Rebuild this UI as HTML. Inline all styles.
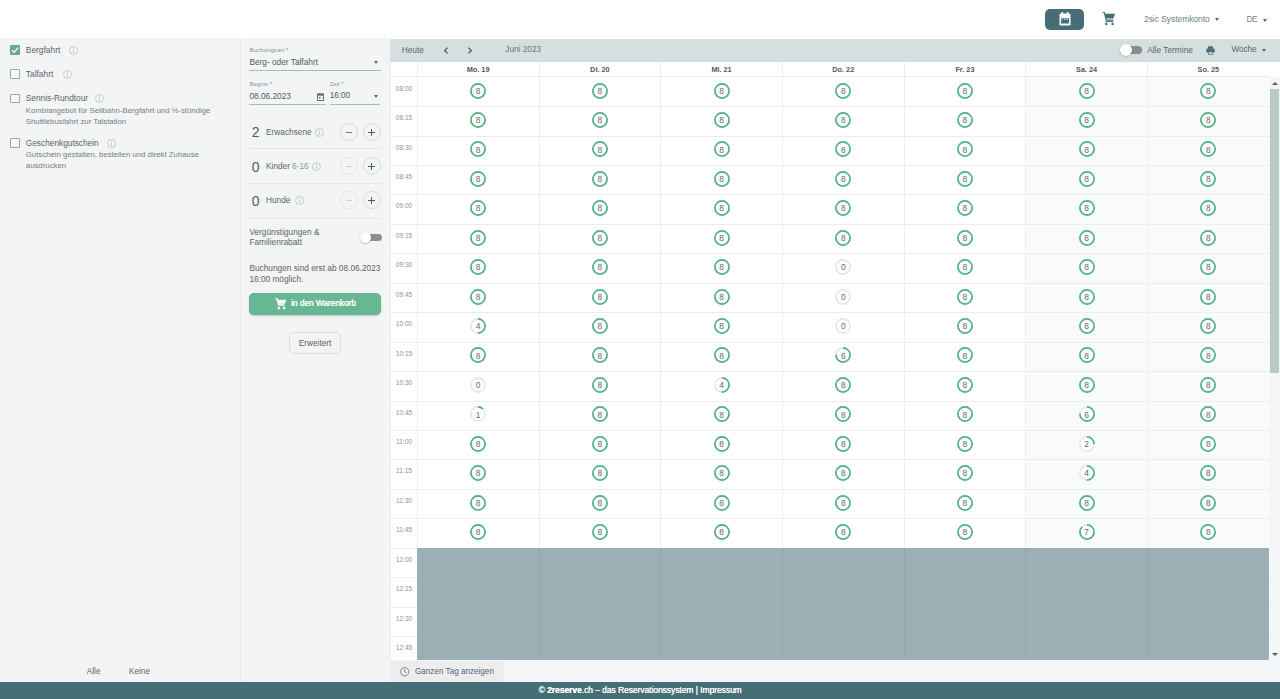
<!DOCTYPE html>
<html><head><meta charset="utf-8"><title>2reserve</title>
<style>
html,body{margin:0;padding:0;width:1280px;height:699px;overflow:hidden;background:#fff;}
body{position:relative;font-family:"Liberation Sans", sans-serif;}
.t{position:absolute;white-space:nowrap;line-height:1;}
.r{position:absolute;}
svg.r{overflow:visible;}
</style></head><body>
<div class="r" style="left:0px;top:0px;width:1280px;height:38px;background:#ffffff;"></div>
<div class="r" style="left:1045px;top:8.5px;width:39px;height:21.5px;background:#466e76;border-radius:5px;"></div>
<svg class="r" style="left:1058px;top:11px" width="14" height="16" viewBox="0 0 14 16">
<rect x="1.5" y="2.5" width="11" height="12" rx="1.3" fill="#fff"/>
<rect x="3.5" y="1" width="1.6" height="3" fill="#fff"/><rect x="8.9" y="1" width="1.6" height="3" fill="#fff"/>
<rect x="3" y="7" width="8" height="5.5" fill="#466e76"/>
<rect x="3.5" y="7.6" width="1.5" height="1" fill="#fff"/><rect x="6" y="7.6" width="1.5" height="1" fill="#fff"/><rect x="8.5" y="7.6" width="1.5" height="1" fill="#fff"/>
</svg>
<svg class="r" style="left:1102px;top:12px" width="14" height="14" viewBox="0 0 14 14">
<path d="M0.5 0.5 L2.3 0.5 L4.3 8.2 L11.2 8.2" fill="none" stroke="#466e76" stroke-width="1.2"/>
<path d="M2.6 1.8 L13 1.8 L11.3 6.6 L3.8 6.6 Z" fill="#466e76"/>
<path d="M3.5 9.6 L11.5 9.6" stroke="#466e76" stroke-width="1"/>
<circle cx="4.3" cy="12" r="1.2" fill="#466e76"/><circle cx="10.6" cy="12" r="1.2" fill="#466e76"/>
</svg>
<div class="t" style="left:1144.00px;top:14.89px;font-size:8.4px;color:#6d7c7e;">2sic Systemkonto</div>
<div class="r" style="left:1215px;top:18px;width:0;height:0;border-left:2.5px solid transparent;border-right:2.5px solid transparent;border-top:3px solid #466e76"></div>
<div class="t" style="left:1246.50px;top:14.89px;font-size:8.4px;color:#7a878b;letter-spacing:-0.6px;">DE</div>
<div class="r" style="left:1263px;top:19px;width:0;height:0;border-left:2.5px solid transparent;border-right:2.5px solid transparent;border-top:3px solid #466e76"></div>
<div class="r" style="left:0px;top:38px;width:240px;height:644px;background:#f3f4f5;"></div>
<div class="r" style="left:240px;top:38px;width:1px;height:644px;background:#e8eaeb;"></div>
<div class="r" style="left:241px;top:38px;width:149px;height:644px;background:#f3f4f5;"></div>
<div class="r" style="left:10px;top:45.3px;width:10px;height:10px;background:#6aa98c;border-radius:1px"></div>
<svg class="r" style="left:10px;top:45.3px" width="10" height="10" viewBox="0 0 10 10"><path d="M2 5.2 L4.1 7.3 L8.3 2.6" fill="none" stroke="#fff" stroke-width="1.4"/></svg>
<div class="t" style="left:25.80px;top:45.69px;font-size:8.4px;color:#5b6468;">Bergfahrt</div>
<svg class="r" style="left:68.50px;top:46.40px" width="9" height="9" viewBox="0 0 10 10"><circle cx="5" cy="5" r="4.4" fill="none" stroke="#b9c2c4" stroke-width="0.9"/><rect x="4.5" y="4.2" width="1" height="3.4" fill="#b9c2c4"/><rect x="4.5" y="2.5" width="1" height="1" fill="#b9c2c4"/></svg>
<div class="r" style="left:10px;top:69.2px;width:7.6px;height:7.6px;border:1.2px solid #95a5a8;border-radius:1px;background:#f8f9f9"></div>
<div class="t" style="left:25.80px;top:69.89px;font-size:8.4px;color:#5b6468;">Talfahrt</div>
<svg class="r" style="left:62.50px;top:70.20px" width="9" height="9" viewBox="0 0 10 10"><circle cx="5" cy="5" r="4.4" fill="none" stroke="#b9c2c4" stroke-width="0.9"/><rect x="4.5" y="4.2" width="1" height="3.4" fill="#b9c2c4"/><rect x="4.5" y="2.5" width="1" height="1" fill="#b9c2c4"/></svg>
<div class="r" style="left:10px;top:93.6px;width:7.6px;height:7.6px;border:1.2px solid #95a5a8;border-radius:1px;background:#f8f9f9"></div>
<div class="t" style="left:25.80px;top:94.27px;font-size:8.3px;color:#5b6468;">Sennis-Rundtour</div>
<svg class="r" style="left:95.20px;top:94.10px" width="9" height="9" viewBox="0 0 10 10"><circle cx="5" cy="5" r="4.4" fill="none" stroke="#b9c2c4" stroke-width="0.9"/><rect x="4.5" y="4.2" width="1" height="3.4" fill="#b9c2c4"/><rect x="4.5" y="2.5" width="1" height="1" fill="#b9c2c4"/></svg>
<div class="t" style="left:25.80px;top:106.80px;font-size:7.8px;color:#74807f;">Kombiangebot für Seilbahn-Bergfahrt und ½-stündige</div>
<div class="t" style="left:25.80px;top:118.30px;font-size:7.8px;color:#74807f;">Shuttlebusfahrt zur Talstation</div>
<div class="r" style="left:10px;top:138px;width:7.6px;height:7.6px;border:1.2px solid #95a5a8;border-radius:1px;background:#f8f9f9"></div>
<div class="t" style="left:25.80px;top:138.97px;font-size:8.3px;color:#5b6468;">Geschenkgutschein</div>
<svg class="r" style="left:106.50px;top:138.50px" width="9" height="9" viewBox="0 0 10 10"><circle cx="5" cy="5" r="4.4" fill="none" stroke="#b9c2c4" stroke-width="0.9"/><rect x="4.5" y="4.2" width="1" height="3.4" fill="#b9c2c4"/><rect x="4.5" y="2.5" width="1" height="1" fill="#b9c2c4"/></svg>
<div class="t" style="left:25.80px;top:150.60px;font-size:7.8px;color:#74807f;">Gutschein gestalten, bestellen und direkt Zuhause</div>
<div class="t" style="left:25.80px;top:162.20px;font-size:7.8px;color:#74807f;">ausdrucken</div>
<div class="t" style="left:86.80px;top:667.76px;font-size:8.2px;color:#5b6468;">Alle</div>
<div class="t" style="left:129.00px;top:667.76px;font-size:8.2px;color:#5b6468;">Keine</div>
<div class="t" style="left:249.40px;top:47.05px;font-size:6.2px;color:#8a9598;">Buchungsart *</div>
<div class="t" style="left:249.40px;top:58.17px;font-size:8.3px;color:#4f5a5e;">Berg- oder Talfahrt</div>
<div class="r" style="left:373.5px;top:60.5px;width:0;height:0;border-left:2.5px solid transparent;border-right:2.5px solid transparent;border-top:3px solid #5b6468"></div>
<div class="r" style="left:249.4px;top:70px;width:132px;height:1px;background:#a9bbb8;"></div>
<div class="t" style="left:249.40px;top:81.22px;font-size:6.0px;color:#8a9598;">Beginn *</div>
<div class="t" style="left:329.70px;top:81.22px;font-size:6.0px;color:#8a9598;">Zeit *</div>
<div class="t" style="left:249.40px;top:91.57px;font-size:8.3px;color:#4f5a5e;">08.06.2023</div>
<svg class="r" style="left:316.5px;top:92.5px" width="7" height="8" viewBox="0 0 7 8"><rect x="0.5" y="1" width="6" height="6.5" fill="none" stroke="#5b6468" stroke-width="0.9"/><rect x="0.5" y="1" width="6" height="1.6" fill="#5b6468"/><rect x="1.8" y="0" width="0.9" height="1.5" fill="#5b6468"/><rect x="4.3" y="0" width="0.9" height="1.5" fill="#5b6468"/><rect x="2" y="4" width="1.5" height="1.5" fill="#5b6468"/></svg>
<div class="t" style="left:329.70px;top:91.66px;font-size:8.2px;color:#4f5a5e;">16:00</div>
<div class="r" style="left:373.5px;top:95px;width:0;height:0;border-left:2.5px solid transparent;border-right:2.5px solid transparent;border-top:3px solid #5b6468"></div>
<div class="r" style="left:249.4px;top:103.5px;width:77px;height:1px;background:#a9bbb8;"></div>
<div class="r" style="left:329.7px;top:103.5px;width:50.5px;height:1px;background:#a9bbb8;"></div>
<div class="t" style="left:251.80px;top:125.35px;font-size:14px;color:#525c60;">2</div>
<div class="t" style="left:266.00px;top:127.67px;font-size:8.3px;color:#5b6468;">Erwachsene</div>
<svg class="r" style="left:315.30px;top:127.50px" width="9" height="9" viewBox="0 0 10 10"><circle cx="5" cy="5" r="4.4" fill="none" stroke="#b9c2c4" stroke-width="0.9"/><rect x="4.5" y="4.2" width="1" height="3.4" fill="#b9c2c4"/><rect x="4.5" y="2.5" width="1" height="1" fill="#b9c2c4"/></svg>
<div class="r" style="left:339.5px;top:122.75px;width:16.5px;height:16.5px;border:1px solid #d3dbdb;border-radius:50%"></div>
<div class="r" style="left:345.5px;top:131.50px;width:6.5px;height:1px;background:#6b7478"></div>
<div class="r" style="left:362.5px;top:122.75px;width:16.5px;height:16.5px;border:1px solid #d3dbdb;border-radius:50%"></div>
<div class="r" style="left:368px;top:131.50px;width:7px;height:1px;background:#4f5a5e"></div>
<div class="r" style="left:371px;top:128.50px;width:1px;height:7px;background:#4f5a5e"></div>
<div class="r" style="left:248.7px;top:148px;width:133px;height:1.2px;background:#e3e7e8;"></div>
<div class="t" style="left:251.80px;top:159.55px;font-size:14px;color:#525c60;">0</div>
<div class="t" style="left:266.00px;top:161.87px;font-size:8.3px;color:#5b6468;">Kinder</div>
<div class="t" style="left:292.00px;top:161.87px;font-size:8.3px;color:#8d9a9d;">6-16</div>
<svg class="r" style="left:312.00px;top:161.70px" width="9" height="9" viewBox="0 0 10 10"><circle cx="5" cy="5" r="4.4" fill="none" stroke="#b9c2c4" stroke-width="0.9"/><rect x="4.5" y="4.2" width="1" height="3.4" fill="#b9c2c4"/><rect x="4.5" y="2.5" width="1" height="1" fill="#b9c2c4"/></svg>
<div class="r" style="left:339.5px;top:156.95px;width:16.5px;height:16.5px;border:1px solid #e3e8e8;border-radius:50%"></div>
<div class="r" style="left:345.5px;top:165.70px;width:6.5px;height:1px;background:#c9d0d1"></div>
<div class="r" style="left:362.5px;top:156.95px;width:16.5px;height:16.5px;border:1px solid #d3dbdb;border-radius:50%"></div>
<div class="r" style="left:368px;top:165.70px;width:7px;height:1px;background:#4f5a5e"></div>
<div class="r" style="left:371px;top:162.70px;width:1px;height:7px;background:#4f5a5e"></div>
<div class="r" style="left:248.7px;top:183.3px;width:133px;height:1px;background:#e3e7e8;"></div>
<div class="t" style="left:251.80px;top:193.55px;font-size:14px;color:#525c60;">0</div>
<div class="t" style="left:266.00px;top:195.87px;font-size:8.3px;color:#5b6468;">Hunde</div>
<svg class="r" style="left:294.50px;top:195.70px" width="9" height="9" viewBox="0 0 10 10"><circle cx="5" cy="5" r="4.4" fill="none" stroke="#b9c2c4" stroke-width="0.9"/><rect x="4.5" y="4.2" width="1" height="3.4" fill="#b9c2c4"/><rect x="4.5" y="2.5" width="1" height="1" fill="#b9c2c4"/></svg>
<div class="r" style="left:339.5px;top:190.95px;width:16.5px;height:16.5px;border:1px solid #e3e8e8;border-radius:50%"></div>
<div class="r" style="left:345.5px;top:199.70px;width:6.5px;height:1px;background:#c9d0d1"></div>
<div class="r" style="left:362.5px;top:190.95px;width:16.5px;height:16.5px;border:1px solid #d3dbdb;border-radius:50%"></div>
<div class="r" style="left:368px;top:199.70px;width:7px;height:1px;background:#4f5a5e"></div>
<div class="r" style="left:371px;top:196.70px;width:1px;height:7px;background:#4f5a5e"></div>
<div class="r" style="left:248.7px;top:217.6px;width:133px;height:1px;background:#e3e7e8;"></div>
<div class="t" style="left:249.40px;top:227.67px;font-size:8.3px;color:#5b6468;">Vergünstigungen &</div>
<div class="t" style="left:249.40px;top:237.57px;font-size:8.3px;color:#5b6468;">Familienrabatt</div>
<div class="r" style="left:362px;top:233.8px;width:19.5px;height:7.6px;background:#8e8e8e;border-radius:4px;"></div>
<div class="r" style="left:360.2px;top:232.3px;width:10.5px;height:10.5px;background:#fff;border-radius:50%;box-shadow:0 0.5px 1.5px rgba(0,0,0,0.35)"></div>
<div class="t" style="left:249.40px;top:263.57px;font-size:8.3px;color:#5f6064;">Buchungen sind erst ab 08.06.2023</div>
<div class="t" style="left:249.40px;top:275.07px;font-size:8.3px;color:#5f6064;">16:00 möglich.</div>
<div class="r" style="left:249.4px;top:292.6px;width:131.7px;height:22.3px;background:#66b894;border-radius:5px;box-shadow:0 1px 2px rgba(0,0,0,0.2);"></div>
<svg class="r" style="left:275px;top:297.5px" width="12" height="12" viewBox="0 0 14 14">
<path d="M0.5 0.8 L2.3 0.8 L4.3 8.2 L11.2 8.2" fill="none" stroke="#fff" stroke-width="1.6"/>
<path d="M2.6 2 L13.2 2 L11.4 6.8 L3.8 6.8 Z" fill="#fff"/>
<circle cx="4.5" cy="11.8" r="1.5" fill="#fff"/><circle cx="10.6" cy="11.8" r="1.5" fill="#fff"/>
</svg>
<div class="t" style="left:291.00px;top:299.51px;font-size:8.26px;color:#ffffff;text-shadow:0.35px 0 0 #fff;">in den Warenkorb</div>
<div class="r" style="left:288.9px;top:332px;width:50px;height:19.5px;border:1px solid #d9dfdf;border-radius:5px"></div>
<div class="t" style="left:298.70px;top:338.57px;font-size:8.3px;color:#5b6468;">Erweitert</div>
<div class="r" style="left:390px;top:38px;width:890px;height:1px;background:#ffffff;"></div>
<div class="r" style="left:390px;top:39px;width:890px;height:23px;background:#d6dfe0;"></div>
<div class="t" style="left:401.70px;top:45.57px;font-size:8.3px;color:#5b6468;">Heute</div>
<svg class="r" style="left:442.5px;top:46.8px" width="6" height="7" viewBox="0 0 6 7"><path d="M4.6 0.6 L1.6 3.5 L4.6 6.4" fill="none" stroke="#3f5c63" stroke-width="1.3"/></svg>
<svg class="r" style="left:467px;top:46.8px" width="6" height="7" viewBox="0 0 6 7"><path d="M1.4 0.6 L4.4 3.5 L1.4 6.4" fill="none" stroke="#3f5c63" stroke-width="1.3"/></svg>
<div class="t" style="left:505.30px;top:45.62px;font-size:8.25px;color:#6b7478;">Juni 2023</div>
<div class="r" style="left:1126px;top:46px;width:16px;height:8px;background:#8c8c8c;border-radius:4px;"></div>
<div class="r" style="left:1120px;top:44.2px;width:12px;height:12px;background:#fff;border-radius:50%;box-shadow:0 0.5px 1.5px rgba(0,0,0,0.3)"></div>
<div class="t" style="left:1147.20px;top:45.93px;font-size:8.35px;color:#5b6468;">Alle Termine</div>
<svg class="r" style="left:1205.5px;top:45.5px" width="9" height="9" viewBox="0 0 9 9"><rect x="2" y="0.3" width="5" height="2.5" fill="#466e76"/><rect x="0.3" y="2.6" width="8.4" height="4" rx="1" fill="#466e76"/><rect x="2" y="5.5" width="5" height="3.2" fill="#466e76"/><rect x="2.7" y="6.2" width="3.6" height="1.8" fill="#d6dfe0"/></svg>
<div class="t" style="left:1231.50px;top:46.11px;font-size:8.14px;color:#5b6468;">Woche</div>
<div class="r" style="left:1261.5px;top:49px;width:0;height:0;border-left:2.5px solid transparent;border-right:2.5px solid transparent;border-top:3px solid #466e76"></div>
<div class="r" style="left:390px;top:62px;width:890px;height:15px;background:#ffffff;"></div>
<div class="r" style="left:390px;top:76px;width:880px;height:1px;background:#e9edee;"></div>
<div class="t" style="left:378.15px;width:200px;text-align:center;top:65.82px;font-size:7.3px;color:#4f585c;font-weight:700;">Mo. 19</div>
<div class="t" style="left:499.85px;width:200px;text-align:center;top:65.82px;font-size:7.3px;color:#4f585c;font-weight:700;">Di. 20</div>
<div class="r" style="left:538.5px;top:62px;width:1px;height:15px;background:#e9edee;"></div>
<div class="t" style="left:621.55px;width:200px;text-align:center;top:65.82px;font-size:7.3px;color:#4f585c;font-weight:700;">Mi. 21</div>
<div class="r" style="left:660.2px;top:62px;width:1px;height:15px;background:#e9edee;"></div>
<div class="t" style="left:743.25px;width:200px;text-align:center;top:65.82px;font-size:7.3px;color:#4f585c;font-weight:700;">Do. 22</div>
<div class="r" style="left:781.9px;top:62px;width:1px;height:15px;background:#e9edee;"></div>
<div class="t" style="left:864.95px;width:200px;text-align:center;top:65.82px;font-size:7.3px;color:#4f585c;font-weight:700;">Fr. 23</div>
<div class="r" style="left:903.6px;top:62px;width:1px;height:15px;background:#e9edee;"></div>
<div class="t" style="left:986.65px;width:200px;text-align:center;top:65.82px;font-size:7.3px;color:#4f585c;font-weight:700;">Sa. 24</div>
<div class="r" style="left:1025.3px;top:62px;width:1px;height:15px;background:#e9edee;"></div>
<div class="t" style="left:1108.35px;width:200px;text-align:center;top:65.82px;font-size:7.3px;color:#4f585c;font-weight:700;">So. 25</div>
<div class="r" style="left:1147.0px;top:62px;width:1px;height:15px;background:#e9edee;"></div>
<div class="r" style="left:416.5px;top:62px;width:1px;height:15px;background:#e9edee;"></div>
<div class="r" style="left:390px;top:77px;width:880px;height:583px;background:#ffffff;"></div>
<div class="r" style="left:389.6px;top:62px;width:1px;height:598px;background:#e9ebec;"></div>
<div class="r" style="left:1025.8px;top:77px;width:244.4px;height:471px;background:#f9fafa;"></div>
<div class="r" style="left:416.5px;top:77px;width:1px;height:583px;background:#eceff1;"></div>
<div class="r" style="left:538.5px;top:77px;width:1px;height:471px;background:#ebeeee;"></div>
<div class="r" style="left:660.2px;top:77px;width:1px;height:471px;background:#ebeeee;"></div>
<div class="r" style="left:781.9px;top:77px;width:1px;height:471px;background:#ebeeee;"></div>
<div class="r" style="left:903.6px;top:77px;width:1px;height:471px;background:#ebeeee;"></div>
<div class="r" style="left:1025.3px;top:77px;width:1px;height:471px;background:#ebeeee;"></div>
<div class="r" style="left:1147.0px;top:77px;width:1px;height:471px;background:#ebeeee;"></div>
<div class="r" style="left:390px;top:106.14px;width:880px;height:1px;background:#ebeeee;"></div>
<div class="r" style="left:390px;top:135.58px;width:880px;height:1px;background:#ebeeee;"></div>
<div class="r" style="left:390px;top:165.02px;width:880px;height:1px;background:#ebeeee;"></div>
<div class="r" style="left:390px;top:194.46px;width:880px;height:1px;background:#ebeeee;"></div>
<div class="r" style="left:390px;top:223.9px;width:880px;height:1px;background:#ebeeee;"></div>
<div class="r" style="left:390px;top:253.34px;width:880px;height:1px;background:#ebeeee;"></div>
<div class="r" style="left:390px;top:282.78px;width:880px;height:1px;background:#ebeeee;"></div>
<div class="r" style="left:390px;top:312.22px;width:880px;height:1px;background:#ebeeee;"></div>
<div class="r" style="left:390px;top:341.66px;width:880px;height:1px;background:#ebeeee;"></div>
<div class="r" style="left:390px;top:371.1px;width:880px;height:1px;background:#ebeeee;"></div>
<div class="r" style="left:390px;top:400.54px;width:880px;height:1px;background:#ebeeee;"></div>
<div class="r" style="left:390px;top:429.98px;width:880px;height:1px;background:#ebeeee;"></div>
<div class="r" style="left:390px;top:459.42px;width:880px;height:1px;background:#ebeeee;"></div>
<div class="r" style="left:390px;top:488.86px;width:880px;height:1px;background:#ebeeee;"></div>
<div class="r" style="left:390px;top:518.3px;width:880px;height:1px;background:#ebeeee;"></div>
<div class="r" style="left:390px;top:547.74px;width:880px;height:1px;background:#ebeeee;"></div>
<div class="r" style="left:390px;top:577.18px;width:880px;height:1px;background:#ebeeee;"></div>
<div class="r" style="left:390px;top:606.62px;width:880px;height:1px;background:#ebeeee;"></div>
<div class="r" style="left:390px;top:636.06px;width:880px;height:1px;background:#ebeeee;"></div>
<div class="t" style="left:304.00px;width:200px;text-align:center;top:85.71px;font-size:6.6px;color:#879795;">08:00</div>
<div class="t" style="left:304.00px;width:200px;text-align:center;top:115.15px;font-size:6.6px;color:#879795;">08:15</div>
<div class="t" style="left:304.00px;width:200px;text-align:center;top:144.59px;font-size:6.6px;color:#879795;">08:30</div>
<div class="t" style="left:304.00px;width:200px;text-align:center;top:174.03px;font-size:6.6px;color:#879795;">08:45</div>
<div class="t" style="left:304.00px;width:200px;text-align:center;top:203.47px;font-size:6.6px;color:#879795;">09:00</div>
<div class="t" style="left:304.00px;width:200px;text-align:center;top:232.91px;font-size:6.6px;color:#879795;">09:15</div>
<div class="t" style="left:304.00px;width:200px;text-align:center;top:262.35px;font-size:6.6px;color:#879795;">09:30</div>
<div class="t" style="left:304.00px;width:200px;text-align:center;top:291.79px;font-size:6.6px;color:#879795;">09:45</div>
<div class="t" style="left:304.00px;width:200px;text-align:center;top:321.23px;font-size:6.6px;color:#879795;">10:00</div>
<div class="t" style="left:304.00px;width:200px;text-align:center;top:350.67px;font-size:6.6px;color:#879795;">10:15</div>
<div class="t" style="left:304.00px;width:200px;text-align:center;top:380.11px;font-size:6.6px;color:#879795;">10:30</div>
<div class="t" style="left:304.00px;width:200px;text-align:center;top:409.55px;font-size:6.6px;color:#879795;">10:45</div>
<div class="t" style="left:304.00px;width:200px;text-align:center;top:438.99px;font-size:6.6px;color:#879795;">11:00</div>
<div class="t" style="left:304.00px;width:200px;text-align:center;top:468.43px;font-size:6.6px;color:#879795;">11:15</div>
<div class="t" style="left:304.00px;width:200px;text-align:center;top:497.87px;font-size:6.6px;color:#879795;">11:30</div>
<div class="t" style="left:304.00px;width:200px;text-align:center;top:527.31px;font-size:6.6px;color:#879795;">11:45</div>
<div class="t" style="left:304.00px;width:200px;text-align:center;top:556.75px;font-size:6.6px;color:#879795;">12:00</div>
<div class="t" style="left:304.00px;width:200px;text-align:center;top:586.19px;font-size:6.6px;color:#879795;">12:15</div>
<div class="t" style="left:304.00px;width:200px;text-align:center;top:615.63px;font-size:6.6px;color:#879795;">12:30</div>
<div class="t" style="left:304.00px;width:200px;text-align:center;top:645.07px;font-size:6.6px;color:#879795;">12:45</div>
<div class="r" style="left:417.3px;top:548px;width:851.9px;height:112px;background:#9bafb5;"></div>
<div class="r" style="left:538.50px;top:548px;width:0;height:112px;border-left:1px dotted #8c9fa5"></div>
<div class="r" style="left:660.20px;top:548px;width:0;height:112px;border-left:1px dotted #8c9fa5"></div>
<div class="r" style="left:781.90px;top:548px;width:0;height:112px;border-left:1px dotted #8c9fa5"></div>
<div class="r" style="left:903.60px;top:548px;width:0;height:112px;border-left:1px dotted #8c9fa5"></div>
<div class="r" style="left:1025.30px;top:548px;width:0;height:112px;border-left:1px dotted #8c9fa5"></div>
<div class="r" style="left:1147.00px;top:548px;width:0;height:112px;border-left:1px dotted #8c9fa5"></div>
<svg class="r" style="left:470.15px;top:82.50px" width="16" height="16" viewBox="0 0 16 16"><circle cx="8" cy="8" r="7.1" fill="#fff" stroke="#e4e8e8" stroke-width="1.7"/><circle cx="8" cy="8" r="7.1" fill="none" stroke="#50b383" stroke-width="1.7"/></svg>
<div class="t" style="left:378.15px;width:200px;text-align:center;top:86.69px;font-size:8.4px;color:#62696d;">8</div>
<svg class="r" style="left:470.15px;top:111.94px" width="16" height="16" viewBox="0 0 16 16"><circle cx="8" cy="8" r="7.1" fill="#fff" stroke="#e4e8e8" stroke-width="1.7"/><circle cx="8" cy="8" r="7.1" fill="none" stroke="#50b383" stroke-width="1.7"/></svg>
<div class="t" style="left:378.15px;width:200px;text-align:center;top:116.13px;font-size:8.4px;color:#62696d;">8</div>
<svg class="r" style="left:470.15px;top:141.38px" width="16" height="16" viewBox="0 0 16 16"><circle cx="8" cy="8" r="7.1" fill="#fff" stroke="#e4e8e8" stroke-width="1.7"/><circle cx="8" cy="8" r="7.1" fill="none" stroke="#50b383" stroke-width="1.7"/></svg>
<div class="t" style="left:378.15px;width:200px;text-align:center;top:145.57px;font-size:8.4px;color:#62696d;">8</div>
<svg class="r" style="left:470.15px;top:170.82px" width="16" height="16" viewBox="0 0 16 16"><circle cx="8" cy="8" r="7.1" fill="#fff" stroke="#e4e8e8" stroke-width="1.7"/><circle cx="8" cy="8" r="7.1" fill="none" stroke="#50b383" stroke-width="1.7"/></svg>
<div class="t" style="left:378.15px;width:200px;text-align:center;top:175.01px;font-size:8.4px;color:#62696d;">8</div>
<svg class="r" style="left:470.15px;top:200.26px" width="16" height="16" viewBox="0 0 16 16"><circle cx="8" cy="8" r="7.1" fill="#fff" stroke="#e4e8e8" stroke-width="1.7"/><circle cx="8" cy="8" r="7.1" fill="none" stroke="#50b383" stroke-width="1.7"/></svg>
<div class="t" style="left:378.15px;width:200px;text-align:center;top:204.45px;font-size:8.4px;color:#62696d;">8</div>
<svg class="r" style="left:470.15px;top:229.70px" width="16" height="16" viewBox="0 0 16 16"><circle cx="8" cy="8" r="7.1" fill="#fff" stroke="#e4e8e8" stroke-width="1.7"/><circle cx="8" cy="8" r="7.1" fill="none" stroke="#50b383" stroke-width="1.7"/></svg>
<div class="t" style="left:378.15px;width:200px;text-align:center;top:233.89px;font-size:8.4px;color:#62696d;">8</div>
<svg class="r" style="left:470.15px;top:259.14px" width="16" height="16" viewBox="0 0 16 16"><circle cx="8" cy="8" r="7.1" fill="#fff" stroke="#e4e8e8" stroke-width="1.7"/><circle cx="8" cy="8" r="7.1" fill="none" stroke="#50b383" stroke-width="1.7"/></svg>
<div class="t" style="left:378.15px;width:200px;text-align:center;top:263.33px;font-size:8.4px;color:#62696d;">8</div>
<svg class="r" style="left:470.15px;top:288.58px" width="16" height="16" viewBox="0 0 16 16"><circle cx="8" cy="8" r="7.1" fill="#fff" stroke="#e4e8e8" stroke-width="1.7"/><circle cx="8" cy="8" r="7.1" fill="none" stroke="#50b383" stroke-width="1.7"/></svg>
<div class="t" style="left:378.15px;width:200px;text-align:center;top:292.77px;font-size:8.4px;color:#62696d;">8</div>
<svg class="r" style="left:470.15px;top:318.02px" width="16" height="16" viewBox="0 0 16 16"><circle cx="8" cy="8" r="7.1" fill="#fff" stroke="#e4e8e8" stroke-width="1.7"/><circle cx="8" cy="8" r="7.1" fill="none" stroke="#50b383" stroke-width="1.7" stroke-dasharray="22.305 44.611" transform="rotate(-90 8 8)"/></svg>
<div class="t" style="left:378.15px;width:200px;text-align:center;top:322.21px;font-size:8.4px;color:#62696d;">4</div>
<svg class="r" style="left:470.15px;top:347.46px" width="16" height="16" viewBox="0 0 16 16"><circle cx="8" cy="8" r="7.1" fill="#fff" stroke="#e4e8e8" stroke-width="1.7"/><circle cx="8" cy="8" r="7.1" fill="none" stroke="#50b383" stroke-width="1.7"/></svg>
<div class="t" style="left:378.15px;width:200px;text-align:center;top:351.65px;font-size:8.4px;color:#62696d;">8</div>
<svg class="r" style="left:470.15px;top:376.90px" width="16" height="16" viewBox="0 0 16 16"><circle cx="8" cy="8" r="7.1" fill="#fff" stroke="#e4e8e8" stroke-width="1.7"/></svg>
<div class="t" style="left:378.15px;width:200px;text-align:center;top:381.09px;font-size:8.4px;color:#62696d;">0</div>
<svg class="r" style="left:470.15px;top:406.34px" width="16" height="16" viewBox="0 0 16 16"><circle cx="8" cy="8" r="7.1" fill="#fff" stroke="#e4e8e8" stroke-width="1.7"/><circle cx="8" cy="8" r="7.1" fill="none" stroke="#50b383" stroke-width="1.7" stroke-dasharray="5.576 44.611" transform="rotate(-90 8 8)"/></svg>
<div class="t" style="left:378.15px;width:200px;text-align:center;top:410.53px;font-size:8.4px;color:#62696d;">1</div>
<svg class="r" style="left:470.15px;top:435.78px" width="16" height="16" viewBox="0 0 16 16"><circle cx="8" cy="8" r="7.1" fill="#fff" stroke="#e4e8e8" stroke-width="1.7"/><circle cx="8" cy="8" r="7.1" fill="none" stroke="#50b383" stroke-width="1.7"/></svg>
<div class="t" style="left:378.15px;width:200px;text-align:center;top:439.97px;font-size:8.4px;color:#62696d;">8</div>
<svg class="r" style="left:470.15px;top:465.22px" width="16" height="16" viewBox="0 0 16 16"><circle cx="8" cy="8" r="7.1" fill="#fff" stroke="#e4e8e8" stroke-width="1.7"/><circle cx="8" cy="8" r="7.1" fill="none" stroke="#50b383" stroke-width="1.7"/></svg>
<div class="t" style="left:378.15px;width:200px;text-align:center;top:469.41px;font-size:8.4px;color:#62696d;">8</div>
<svg class="r" style="left:470.15px;top:494.66px" width="16" height="16" viewBox="0 0 16 16"><circle cx="8" cy="8" r="7.1" fill="#fff" stroke="#e4e8e8" stroke-width="1.7"/><circle cx="8" cy="8" r="7.1" fill="none" stroke="#50b383" stroke-width="1.7"/></svg>
<div class="t" style="left:378.15px;width:200px;text-align:center;top:498.85px;font-size:8.4px;color:#62696d;">8</div>
<svg class="r" style="left:470.15px;top:524.10px" width="16" height="16" viewBox="0 0 16 16"><circle cx="8" cy="8" r="7.1" fill="#fff" stroke="#e4e8e8" stroke-width="1.7"/><circle cx="8" cy="8" r="7.1" fill="none" stroke="#50b383" stroke-width="1.7"/></svg>
<div class="t" style="left:378.15px;width:200px;text-align:center;top:528.29px;font-size:8.4px;color:#62696d;">8</div>
<svg class="r" style="left:591.85px;top:82.50px" width="16" height="16" viewBox="0 0 16 16"><circle cx="8" cy="8" r="7.1" fill="#fff" stroke="#e4e8e8" stroke-width="1.7"/><circle cx="8" cy="8" r="7.1" fill="none" stroke="#50b383" stroke-width="1.7"/></svg>
<div class="t" style="left:499.85px;width:200px;text-align:center;top:86.69px;font-size:8.4px;color:#62696d;">8</div>
<svg class="r" style="left:591.85px;top:111.94px" width="16" height="16" viewBox="0 0 16 16"><circle cx="8" cy="8" r="7.1" fill="#fff" stroke="#e4e8e8" stroke-width="1.7"/><circle cx="8" cy="8" r="7.1" fill="none" stroke="#50b383" stroke-width="1.7"/></svg>
<div class="t" style="left:499.85px;width:200px;text-align:center;top:116.13px;font-size:8.4px;color:#62696d;">8</div>
<svg class="r" style="left:591.85px;top:141.38px" width="16" height="16" viewBox="0 0 16 16"><circle cx="8" cy="8" r="7.1" fill="#fff" stroke="#e4e8e8" stroke-width="1.7"/><circle cx="8" cy="8" r="7.1" fill="none" stroke="#50b383" stroke-width="1.7"/></svg>
<div class="t" style="left:499.85px;width:200px;text-align:center;top:145.57px;font-size:8.4px;color:#62696d;">8</div>
<svg class="r" style="left:591.85px;top:170.82px" width="16" height="16" viewBox="0 0 16 16"><circle cx="8" cy="8" r="7.1" fill="#fff" stroke="#e4e8e8" stroke-width="1.7"/><circle cx="8" cy="8" r="7.1" fill="none" stroke="#50b383" stroke-width="1.7"/></svg>
<div class="t" style="left:499.85px;width:200px;text-align:center;top:175.01px;font-size:8.4px;color:#62696d;">8</div>
<svg class="r" style="left:591.85px;top:200.26px" width="16" height="16" viewBox="0 0 16 16"><circle cx="8" cy="8" r="7.1" fill="#fff" stroke="#e4e8e8" stroke-width="1.7"/><circle cx="8" cy="8" r="7.1" fill="none" stroke="#50b383" stroke-width="1.7"/></svg>
<div class="t" style="left:499.85px;width:200px;text-align:center;top:204.45px;font-size:8.4px;color:#62696d;">8</div>
<svg class="r" style="left:591.85px;top:229.70px" width="16" height="16" viewBox="0 0 16 16"><circle cx="8" cy="8" r="7.1" fill="#fff" stroke="#e4e8e8" stroke-width="1.7"/><circle cx="8" cy="8" r="7.1" fill="none" stroke="#50b383" stroke-width="1.7"/></svg>
<div class="t" style="left:499.85px;width:200px;text-align:center;top:233.89px;font-size:8.4px;color:#62696d;">8</div>
<svg class="r" style="left:591.85px;top:259.14px" width="16" height="16" viewBox="0 0 16 16"><circle cx="8" cy="8" r="7.1" fill="#fff" stroke="#e4e8e8" stroke-width="1.7"/><circle cx="8" cy="8" r="7.1" fill="none" stroke="#50b383" stroke-width="1.7"/></svg>
<div class="t" style="left:499.85px;width:200px;text-align:center;top:263.33px;font-size:8.4px;color:#62696d;">8</div>
<svg class="r" style="left:591.85px;top:288.58px" width="16" height="16" viewBox="0 0 16 16"><circle cx="8" cy="8" r="7.1" fill="#fff" stroke="#e4e8e8" stroke-width="1.7"/><circle cx="8" cy="8" r="7.1" fill="none" stroke="#50b383" stroke-width="1.7"/></svg>
<div class="t" style="left:499.85px;width:200px;text-align:center;top:292.77px;font-size:8.4px;color:#62696d;">8</div>
<svg class="r" style="left:591.85px;top:318.02px" width="16" height="16" viewBox="0 0 16 16"><circle cx="8" cy="8" r="7.1" fill="#fff" stroke="#e4e8e8" stroke-width="1.7"/><circle cx="8" cy="8" r="7.1" fill="none" stroke="#50b383" stroke-width="1.7"/></svg>
<div class="t" style="left:499.85px;width:200px;text-align:center;top:322.21px;font-size:8.4px;color:#62696d;">8</div>
<svg class="r" style="left:591.85px;top:347.46px" width="16" height="16" viewBox="0 0 16 16"><circle cx="8" cy="8" r="7.1" fill="#fff" stroke="#e4e8e8" stroke-width="1.7"/><circle cx="8" cy="8" r="7.1" fill="none" stroke="#50b383" stroke-width="1.7"/></svg>
<div class="t" style="left:499.85px;width:200px;text-align:center;top:351.65px;font-size:8.4px;color:#62696d;">8</div>
<svg class="r" style="left:591.85px;top:376.90px" width="16" height="16" viewBox="0 0 16 16"><circle cx="8" cy="8" r="7.1" fill="#fff" stroke="#e4e8e8" stroke-width="1.7"/><circle cx="8" cy="8" r="7.1" fill="none" stroke="#50b383" stroke-width="1.7"/></svg>
<div class="t" style="left:499.85px;width:200px;text-align:center;top:381.09px;font-size:8.4px;color:#62696d;">8</div>
<svg class="r" style="left:591.85px;top:406.34px" width="16" height="16" viewBox="0 0 16 16"><circle cx="8" cy="8" r="7.1" fill="#fff" stroke="#e4e8e8" stroke-width="1.7"/><circle cx="8" cy="8" r="7.1" fill="none" stroke="#50b383" stroke-width="1.7"/></svg>
<div class="t" style="left:499.85px;width:200px;text-align:center;top:410.53px;font-size:8.4px;color:#62696d;">8</div>
<svg class="r" style="left:591.85px;top:435.78px" width="16" height="16" viewBox="0 0 16 16"><circle cx="8" cy="8" r="7.1" fill="#fff" stroke="#e4e8e8" stroke-width="1.7"/><circle cx="8" cy="8" r="7.1" fill="none" stroke="#50b383" stroke-width="1.7"/></svg>
<div class="t" style="left:499.85px;width:200px;text-align:center;top:439.97px;font-size:8.4px;color:#62696d;">8</div>
<svg class="r" style="left:591.85px;top:465.22px" width="16" height="16" viewBox="0 0 16 16"><circle cx="8" cy="8" r="7.1" fill="#fff" stroke="#e4e8e8" stroke-width="1.7"/><circle cx="8" cy="8" r="7.1" fill="none" stroke="#50b383" stroke-width="1.7"/></svg>
<div class="t" style="left:499.85px;width:200px;text-align:center;top:469.41px;font-size:8.4px;color:#62696d;">8</div>
<svg class="r" style="left:591.85px;top:494.66px" width="16" height="16" viewBox="0 0 16 16"><circle cx="8" cy="8" r="7.1" fill="#fff" stroke="#e4e8e8" stroke-width="1.7"/><circle cx="8" cy="8" r="7.1" fill="none" stroke="#50b383" stroke-width="1.7"/></svg>
<div class="t" style="left:499.85px;width:200px;text-align:center;top:498.85px;font-size:8.4px;color:#62696d;">8</div>
<svg class="r" style="left:591.85px;top:524.10px" width="16" height="16" viewBox="0 0 16 16"><circle cx="8" cy="8" r="7.1" fill="#fff" stroke="#e4e8e8" stroke-width="1.7"/><circle cx="8" cy="8" r="7.1" fill="none" stroke="#50b383" stroke-width="1.7"/></svg>
<div class="t" style="left:499.85px;width:200px;text-align:center;top:528.29px;font-size:8.4px;color:#62696d;">8</div>
<svg class="r" style="left:713.55px;top:82.50px" width="16" height="16" viewBox="0 0 16 16"><circle cx="8" cy="8" r="7.1" fill="#fff" stroke="#e4e8e8" stroke-width="1.7"/><circle cx="8" cy="8" r="7.1" fill="none" stroke="#50b383" stroke-width="1.7"/></svg>
<div class="t" style="left:621.55px;width:200px;text-align:center;top:86.69px;font-size:8.4px;color:#62696d;">8</div>
<svg class="r" style="left:713.55px;top:111.94px" width="16" height="16" viewBox="0 0 16 16"><circle cx="8" cy="8" r="7.1" fill="#fff" stroke="#e4e8e8" stroke-width="1.7"/><circle cx="8" cy="8" r="7.1" fill="none" stroke="#50b383" stroke-width="1.7"/></svg>
<div class="t" style="left:621.55px;width:200px;text-align:center;top:116.13px;font-size:8.4px;color:#62696d;">8</div>
<svg class="r" style="left:713.55px;top:141.38px" width="16" height="16" viewBox="0 0 16 16"><circle cx="8" cy="8" r="7.1" fill="#fff" stroke="#e4e8e8" stroke-width="1.7"/><circle cx="8" cy="8" r="7.1" fill="none" stroke="#50b383" stroke-width="1.7"/></svg>
<div class="t" style="left:621.55px;width:200px;text-align:center;top:145.57px;font-size:8.4px;color:#62696d;">8</div>
<svg class="r" style="left:713.55px;top:170.82px" width="16" height="16" viewBox="0 0 16 16"><circle cx="8" cy="8" r="7.1" fill="#fff" stroke="#e4e8e8" stroke-width="1.7"/><circle cx="8" cy="8" r="7.1" fill="none" stroke="#50b383" stroke-width="1.7"/></svg>
<div class="t" style="left:621.55px;width:200px;text-align:center;top:175.01px;font-size:8.4px;color:#62696d;">8</div>
<svg class="r" style="left:713.55px;top:200.26px" width="16" height="16" viewBox="0 0 16 16"><circle cx="8" cy="8" r="7.1" fill="#fff" stroke="#e4e8e8" stroke-width="1.7"/><circle cx="8" cy="8" r="7.1" fill="none" stroke="#50b383" stroke-width="1.7"/></svg>
<div class="t" style="left:621.55px;width:200px;text-align:center;top:204.45px;font-size:8.4px;color:#62696d;">8</div>
<svg class="r" style="left:713.55px;top:229.70px" width="16" height="16" viewBox="0 0 16 16"><circle cx="8" cy="8" r="7.1" fill="#fff" stroke="#e4e8e8" stroke-width="1.7"/><circle cx="8" cy="8" r="7.1" fill="none" stroke="#50b383" stroke-width="1.7"/></svg>
<div class="t" style="left:621.55px;width:200px;text-align:center;top:233.89px;font-size:8.4px;color:#62696d;">8</div>
<svg class="r" style="left:713.55px;top:259.14px" width="16" height="16" viewBox="0 0 16 16"><circle cx="8" cy="8" r="7.1" fill="#fff" stroke="#e4e8e8" stroke-width="1.7"/><circle cx="8" cy="8" r="7.1" fill="none" stroke="#50b383" stroke-width="1.7"/></svg>
<div class="t" style="left:621.55px;width:200px;text-align:center;top:263.33px;font-size:8.4px;color:#62696d;">8</div>
<svg class="r" style="left:713.55px;top:288.58px" width="16" height="16" viewBox="0 0 16 16"><circle cx="8" cy="8" r="7.1" fill="#fff" stroke="#e4e8e8" stroke-width="1.7"/><circle cx="8" cy="8" r="7.1" fill="none" stroke="#50b383" stroke-width="1.7"/></svg>
<div class="t" style="left:621.55px;width:200px;text-align:center;top:292.77px;font-size:8.4px;color:#62696d;">8</div>
<svg class="r" style="left:713.55px;top:318.02px" width="16" height="16" viewBox="0 0 16 16"><circle cx="8" cy="8" r="7.1" fill="#fff" stroke="#e4e8e8" stroke-width="1.7"/><circle cx="8" cy="8" r="7.1" fill="none" stroke="#50b383" stroke-width="1.7"/></svg>
<div class="t" style="left:621.55px;width:200px;text-align:center;top:322.21px;font-size:8.4px;color:#62696d;">8</div>
<svg class="r" style="left:713.55px;top:347.46px" width="16" height="16" viewBox="0 0 16 16"><circle cx="8" cy="8" r="7.1" fill="#fff" stroke="#e4e8e8" stroke-width="1.7"/><circle cx="8" cy="8" r="7.1" fill="none" stroke="#50b383" stroke-width="1.7"/></svg>
<div class="t" style="left:621.55px;width:200px;text-align:center;top:351.65px;font-size:8.4px;color:#62696d;">8</div>
<svg class="r" style="left:713.55px;top:376.90px" width="16" height="16" viewBox="0 0 16 16"><circle cx="8" cy="8" r="7.1" fill="#fff" stroke="#e4e8e8" stroke-width="1.7"/><circle cx="8" cy="8" r="7.1" fill="none" stroke="#50b383" stroke-width="1.7" stroke-dasharray="22.305 44.611" transform="rotate(-90 8 8)"/></svg>
<div class="t" style="left:621.55px;width:200px;text-align:center;top:381.09px;font-size:8.4px;color:#62696d;">4</div>
<svg class="r" style="left:713.55px;top:406.34px" width="16" height="16" viewBox="0 0 16 16"><circle cx="8" cy="8" r="7.1" fill="#fff" stroke="#e4e8e8" stroke-width="1.7"/><circle cx="8" cy="8" r="7.1" fill="none" stroke="#50b383" stroke-width="1.7"/></svg>
<div class="t" style="left:621.55px;width:200px;text-align:center;top:410.53px;font-size:8.4px;color:#62696d;">8</div>
<svg class="r" style="left:713.55px;top:435.78px" width="16" height="16" viewBox="0 0 16 16"><circle cx="8" cy="8" r="7.1" fill="#fff" stroke="#e4e8e8" stroke-width="1.7"/><circle cx="8" cy="8" r="7.1" fill="none" stroke="#50b383" stroke-width="1.7"/></svg>
<div class="t" style="left:621.55px;width:200px;text-align:center;top:439.97px;font-size:8.4px;color:#62696d;">8</div>
<svg class="r" style="left:713.55px;top:465.22px" width="16" height="16" viewBox="0 0 16 16"><circle cx="8" cy="8" r="7.1" fill="#fff" stroke="#e4e8e8" stroke-width="1.7"/><circle cx="8" cy="8" r="7.1" fill="none" stroke="#50b383" stroke-width="1.7"/></svg>
<div class="t" style="left:621.55px;width:200px;text-align:center;top:469.41px;font-size:8.4px;color:#62696d;">8</div>
<svg class="r" style="left:713.55px;top:494.66px" width="16" height="16" viewBox="0 0 16 16"><circle cx="8" cy="8" r="7.1" fill="#fff" stroke="#e4e8e8" stroke-width="1.7"/><circle cx="8" cy="8" r="7.1" fill="none" stroke="#50b383" stroke-width="1.7"/></svg>
<div class="t" style="left:621.55px;width:200px;text-align:center;top:498.85px;font-size:8.4px;color:#62696d;">8</div>
<svg class="r" style="left:713.55px;top:524.10px" width="16" height="16" viewBox="0 0 16 16"><circle cx="8" cy="8" r="7.1" fill="#fff" stroke="#e4e8e8" stroke-width="1.7"/><circle cx="8" cy="8" r="7.1" fill="none" stroke="#50b383" stroke-width="1.7"/></svg>
<div class="t" style="left:621.55px;width:200px;text-align:center;top:528.29px;font-size:8.4px;color:#62696d;">8</div>
<svg class="r" style="left:835.25px;top:82.50px" width="16" height="16" viewBox="0 0 16 16"><circle cx="8" cy="8" r="7.1" fill="#fff" stroke="#e4e8e8" stroke-width="1.7"/><circle cx="8" cy="8" r="7.1" fill="none" stroke="#50b383" stroke-width="1.7"/></svg>
<div class="t" style="left:743.25px;width:200px;text-align:center;top:86.69px;font-size:8.4px;color:#62696d;">8</div>
<svg class="r" style="left:835.25px;top:111.94px" width="16" height="16" viewBox="0 0 16 16"><circle cx="8" cy="8" r="7.1" fill="#fff" stroke="#e4e8e8" stroke-width="1.7"/><circle cx="8" cy="8" r="7.1" fill="none" stroke="#50b383" stroke-width="1.7"/></svg>
<div class="t" style="left:743.25px;width:200px;text-align:center;top:116.13px;font-size:8.4px;color:#62696d;">8</div>
<svg class="r" style="left:835.25px;top:141.38px" width="16" height="16" viewBox="0 0 16 16"><circle cx="8" cy="8" r="7.1" fill="#fff" stroke="#e4e8e8" stroke-width="1.7"/><circle cx="8" cy="8" r="7.1" fill="none" stroke="#50b383" stroke-width="1.7"/></svg>
<div class="t" style="left:743.25px;width:200px;text-align:center;top:145.57px;font-size:8.4px;color:#62696d;">8</div>
<svg class="r" style="left:835.25px;top:170.82px" width="16" height="16" viewBox="0 0 16 16"><circle cx="8" cy="8" r="7.1" fill="#fff" stroke="#e4e8e8" stroke-width="1.7"/><circle cx="8" cy="8" r="7.1" fill="none" stroke="#50b383" stroke-width="1.7"/></svg>
<div class="t" style="left:743.25px;width:200px;text-align:center;top:175.01px;font-size:8.4px;color:#62696d;">8</div>
<svg class="r" style="left:835.25px;top:200.26px" width="16" height="16" viewBox="0 0 16 16"><circle cx="8" cy="8" r="7.1" fill="#fff" stroke="#e4e8e8" stroke-width="1.7"/><circle cx="8" cy="8" r="7.1" fill="none" stroke="#50b383" stroke-width="1.7"/></svg>
<div class="t" style="left:743.25px;width:200px;text-align:center;top:204.45px;font-size:8.4px;color:#62696d;">8</div>
<svg class="r" style="left:835.25px;top:229.70px" width="16" height="16" viewBox="0 0 16 16"><circle cx="8" cy="8" r="7.1" fill="#fff" stroke="#e4e8e8" stroke-width="1.7"/><circle cx="8" cy="8" r="7.1" fill="none" stroke="#50b383" stroke-width="1.7"/></svg>
<div class="t" style="left:743.25px;width:200px;text-align:center;top:233.89px;font-size:8.4px;color:#62696d;">8</div>
<svg class="r" style="left:835.25px;top:259.14px" width="16" height="16" viewBox="0 0 16 16"><circle cx="8" cy="8" r="7.1" fill="#fff" stroke="#e4e8e8" stroke-width="1.7"/></svg>
<div class="t" style="left:743.25px;width:200px;text-align:center;top:263.33px;font-size:8.4px;color:#62696d;">0</div>
<svg class="r" style="left:835.25px;top:288.58px" width="16" height="16" viewBox="0 0 16 16"><circle cx="8" cy="8" r="7.1" fill="#fff" stroke="#e4e8e8" stroke-width="1.7"/></svg>
<div class="t" style="left:743.25px;width:200px;text-align:center;top:292.77px;font-size:8.4px;color:#62696d;">0</div>
<svg class="r" style="left:835.25px;top:318.02px" width="16" height="16" viewBox="0 0 16 16"><circle cx="8" cy="8" r="7.1" fill="#fff" stroke="#e4e8e8" stroke-width="1.7"/></svg>
<div class="t" style="left:743.25px;width:200px;text-align:center;top:322.21px;font-size:8.4px;color:#62696d;">0</div>
<svg class="r" style="left:835.25px;top:347.46px" width="16" height="16" viewBox="0 0 16 16"><circle cx="8" cy="8" r="7.1" fill="#fff" stroke="#e4e8e8" stroke-width="1.7"/><circle cx="8" cy="8" r="7.1" fill="none" stroke="#50b383" stroke-width="1.7" stroke-dasharray="33.458 44.611" transform="rotate(-90 8 8)"/></svg>
<div class="t" style="left:743.25px;width:200px;text-align:center;top:351.65px;font-size:8.4px;color:#62696d;">6</div>
<svg class="r" style="left:835.25px;top:376.90px" width="16" height="16" viewBox="0 0 16 16"><circle cx="8" cy="8" r="7.1" fill="#fff" stroke="#e4e8e8" stroke-width="1.7"/><circle cx="8" cy="8" r="7.1" fill="none" stroke="#50b383" stroke-width="1.7"/></svg>
<div class="t" style="left:743.25px;width:200px;text-align:center;top:381.09px;font-size:8.4px;color:#62696d;">8</div>
<svg class="r" style="left:835.25px;top:406.34px" width="16" height="16" viewBox="0 0 16 16"><circle cx="8" cy="8" r="7.1" fill="#fff" stroke="#e4e8e8" stroke-width="1.7"/><circle cx="8" cy="8" r="7.1" fill="none" stroke="#50b383" stroke-width="1.7"/></svg>
<div class="t" style="left:743.25px;width:200px;text-align:center;top:410.53px;font-size:8.4px;color:#62696d;">8</div>
<svg class="r" style="left:835.25px;top:435.78px" width="16" height="16" viewBox="0 0 16 16"><circle cx="8" cy="8" r="7.1" fill="#fff" stroke="#e4e8e8" stroke-width="1.7"/><circle cx="8" cy="8" r="7.1" fill="none" stroke="#50b383" stroke-width="1.7"/></svg>
<div class="t" style="left:743.25px;width:200px;text-align:center;top:439.97px;font-size:8.4px;color:#62696d;">8</div>
<svg class="r" style="left:835.25px;top:465.22px" width="16" height="16" viewBox="0 0 16 16"><circle cx="8" cy="8" r="7.1" fill="#fff" stroke="#e4e8e8" stroke-width="1.7"/><circle cx="8" cy="8" r="7.1" fill="none" stroke="#50b383" stroke-width="1.7"/></svg>
<div class="t" style="left:743.25px;width:200px;text-align:center;top:469.41px;font-size:8.4px;color:#62696d;">8</div>
<svg class="r" style="left:835.25px;top:494.66px" width="16" height="16" viewBox="0 0 16 16"><circle cx="8" cy="8" r="7.1" fill="#fff" stroke="#e4e8e8" stroke-width="1.7"/><circle cx="8" cy="8" r="7.1" fill="none" stroke="#50b383" stroke-width="1.7"/></svg>
<div class="t" style="left:743.25px;width:200px;text-align:center;top:498.85px;font-size:8.4px;color:#62696d;">8</div>
<svg class="r" style="left:835.25px;top:524.10px" width="16" height="16" viewBox="0 0 16 16"><circle cx="8" cy="8" r="7.1" fill="#fff" stroke="#e4e8e8" stroke-width="1.7"/><circle cx="8" cy="8" r="7.1" fill="none" stroke="#50b383" stroke-width="1.7"/></svg>
<div class="t" style="left:743.25px;width:200px;text-align:center;top:528.29px;font-size:8.4px;color:#62696d;">8</div>
<svg class="r" style="left:956.95px;top:82.50px" width="16" height="16" viewBox="0 0 16 16"><circle cx="8" cy="8" r="7.1" fill="#fff" stroke="#e4e8e8" stroke-width="1.7"/><circle cx="8" cy="8" r="7.1" fill="none" stroke="#50b383" stroke-width="1.7"/></svg>
<div class="t" style="left:864.95px;width:200px;text-align:center;top:86.69px;font-size:8.4px;color:#62696d;">8</div>
<svg class="r" style="left:956.95px;top:111.94px" width="16" height="16" viewBox="0 0 16 16"><circle cx="8" cy="8" r="7.1" fill="#fff" stroke="#e4e8e8" stroke-width="1.7"/><circle cx="8" cy="8" r="7.1" fill="none" stroke="#50b383" stroke-width="1.7"/></svg>
<div class="t" style="left:864.95px;width:200px;text-align:center;top:116.13px;font-size:8.4px;color:#62696d;">8</div>
<svg class="r" style="left:956.95px;top:141.38px" width="16" height="16" viewBox="0 0 16 16"><circle cx="8" cy="8" r="7.1" fill="#fff" stroke="#e4e8e8" stroke-width="1.7"/><circle cx="8" cy="8" r="7.1" fill="none" stroke="#50b383" stroke-width="1.7"/></svg>
<div class="t" style="left:864.95px;width:200px;text-align:center;top:145.57px;font-size:8.4px;color:#62696d;">8</div>
<svg class="r" style="left:956.95px;top:170.82px" width="16" height="16" viewBox="0 0 16 16"><circle cx="8" cy="8" r="7.1" fill="#fff" stroke="#e4e8e8" stroke-width="1.7"/><circle cx="8" cy="8" r="7.1" fill="none" stroke="#50b383" stroke-width="1.7"/></svg>
<div class="t" style="left:864.95px;width:200px;text-align:center;top:175.01px;font-size:8.4px;color:#62696d;">8</div>
<svg class="r" style="left:956.95px;top:200.26px" width="16" height="16" viewBox="0 0 16 16"><circle cx="8" cy="8" r="7.1" fill="#fff" stroke="#e4e8e8" stroke-width="1.7"/><circle cx="8" cy="8" r="7.1" fill="none" stroke="#50b383" stroke-width="1.7"/></svg>
<div class="t" style="left:864.95px;width:200px;text-align:center;top:204.45px;font-size:8.4px;color:#62696d;">8</div>
<svg class="r" style="left:956.95px;top:229.70px" width="16" height="16" viewBox="0 0 16 16"><circle cx="8" cy="8" r="7.1" fill="#fff" stroke="#e4e8e8" stroke-width="1.7"/><circle cx="8" cy="8" r="7.1" fill="none" stroke="#50b383" stroke-width="1.7"/></svg>
<div class="t" style="left:864.95px;width:200px;text-align:center;top:233.89px;font-size:8.4px;color:#62696d;">8</div>
<svg class="r" style="left:956.95px;top:259.14px" width="16" height="16" viewBox="0 0 16 16"><circle cx="8" cy="8" r="7.1" fill="#fff" stroke="#e4e8e8" stroke-width="1.7"/><circle cx="8" cy="8" r="7.1" fill="none" stroke="#50b383" stroke-width="1.7"/></svg>
<div class="t" style="left:864.95px;width:200px;text-align:center;top:263.33px;font-size:8.4px;color:#62696d;">8</div>
<svg class="r" style="left:956.95px;top:288.58px" width="16" height="16" viewBox="0 0 16 16"><circle cx="8" cy="8" r="7.1" fill="#fff" stroke="#e4e8e8" stroke-width="1.7"/><circle cx="8" cy="8" r="7.1" fill="none" stroke="#50b383" stroke-width="1.7"/></svg>
<div class="t" style="left:864.95px;width:200px;text-align:center;top:292.77px;font-size:8.4px;color:#62696d;">8</div>
<svg class="r" style="left:956.95px;top:318.02px" width="16" height="16" viewBox="0 0 16 16"><circle cx="8" cy="8" r="7.1" fill="#fff" stroke="#e4e8e8" stroke-width="1.7"/><circle cx="8" cy="8" r="7.1" fill="none" stroke="#50b383" stroke-width="1.7"/></svg>
<div class="t" style="left:864.95px;width:200px;text-align:center;top:322.21px;font-size:8.4px;color:#62696d;">8</div>
<svg class="r" style="left:956.95px;top:347.46px" width="16" height="16" viewBox="0 0 16 16"><circle cx="8" cy="8" r="7.1" fill="#fff" stroke="#e4e8e8" stroke-width="1.7"/><circle cx="8" cy="8" r="7.1" fill="none" stroke="#50b383" stroke-width="1.7"/></svg>
<div class="t" style="left:864.95px;width:200px;text-align:center;top:351.65px;font-size:8.4px;color:#62696d;">8</div>
<svg class="r" style="left:956.95px;top:376.90px" width="16" height="16" viewBox="0 0 16 16"><circle cx="8" cy="8" r="7.1" fill="#fff" stroke="#e4e8e8" stroke-width="1.7"/><circle cx="8" cy="8" r="7.1" fill="none" stroke="#50b383" stroke-width="1.7"/></svg>
<div class="t" style="left:864.95px;width:200px;text-align:center;top:381.09px;font-size:8.4px;color:#62696d;">8</div>
<svg class="r" style="left:956.95px;top:406.34px" width="16" height="16" viewBox="0 0 16 16"><circle cx="8" cy="8" r="7.1" fill="#fff" stroke="#e4e8e8" stroke-width="1.7"/><circle cx="8" cy="8" r="7.1" fill="none" stroke="#50b383" stroke-width="1.7"/></svg>
<div class="t" style="left:864.95px;width:200px;text-align:center;top:410.53px;font-size:8.4px;color:#62696d;">8</div>
<svg class="r" style="left:956.95px;top:435.78px" width="16" height="16" viewBox="0 0 16 16"><circle cx="8" cy="8" r="7.1" fill="#fff" stroke="#e4e8e8" stroke-width="1.7"/><circle cx="8" cy="8" r="7.1" fill="none" stroke="#50b383" stroke-width="1.7"/></svg>
<div class="t" style="left:864.95px;width:200px;text-align:center;top:439.97px;font-size:8.4px;color:#62696d;">8</div>
<svg class="r" style="left:956.95px;top:465.22px" width="16" height="16" viewBox="0 0 16 16"><circle cx="8" cy="8" r="7.1" fill="#fff" stroke="#e4e8e8" stroke-width="1.7"/><circle cx="8" cy="8" r="7.1" fill="none" stroke="#50b383" stroke-width="1.7"/></svg>
<div class="t" style="left:864.95px;width:200px;text-align:center;top:469.41px;font-size:8.4px;color:#62696d;">8</div>
<svg class="r" style="left:956.95px;top:494.66px" width="16" height="16" viewBox="0 0 16 16"><circle cx="8" cy="8" r="7.1" fill="#fff" stroke="#e4e8e8" stroke-width="1.7"/><circle cx="8" cy="8" r="7.1" fill="none" stroke="#50b383" stroke-width="1.7"/></svg>
<div class="t" style="left:864.95px;width:200px;text-align:center;top:498.85px;font-size:8.4px;color:#62696d;">8</div>
<svg class="r" style="left:956.95px;top:524.10px" width="16" height="16" viewBox="0 0 16 16"><circle cx="8" cy="8" r="7.1" fill="#fff" stroke="#e4e8e8" stroke-width="1.7"/><circle cx="8" cy="8" r="7.1" fill="none" stroke="#50b383" stroke-width="1.7"/></svg>
<div class="t" style="left:864.95px;width:200px;text-align:center;top:528.29px;font-size:8.4px;color:#62696d;">8</div>
<svg class="r" style="left:1078.65px;top:82.50px" width="16" height="16" viewBox="0 0 16 16"><circle cx="8" cy="8" r="7.1" fill="#fff" stroke="#e4e8e8" stroke-width="1.7"/><circle cx="8" cy="8" r="7.1" fill="none" stroke="#50b383" stroke-width="1.7"/></svg>
<div class="t" style="left:986.65px;width:200px;text-align:center;top:86.69px;font-size:8.4px;color:#62696d;">8</div>
<svg class="r" style="left:1078.65px;top:111.94px" width="16" height="16" viewBox="0 0 16 16"><circle cx="8" cy="8" r="7.1" fill="#fff" stroke="#e4e8e8" stroke-width="1.7"/><circle cx="8" cy="8" r="7.1" fill="none" stroke="#50b383" stroke-width="1.7"/></svg>
<div class="t" style="left:986.65px;width:200px;text-align:center;top:116.13px;font-size:8.4px;color:#62696d;">8</div>
<svg class="r" style="left:1078.65px;top:141.38px" width="16" height="16" viewBox="0 0 16 16"><circle cx="8" cy="8" r="7.1" fill="#fff" stroke="#e4e8e8" stroke-width="1.7"/><circle cx="8" cy="8" r="7.1" fill="none" stroke="#50b383" stroke-width="1.7"/></svg>
<div class="t" style="left:986.65px;width:200px;text-align:center;top:145.57px;font-size:8.4px;color:#62696d;">8</div>
<svg class="r" style="left:1078.65px;top:170.82px" width="16" height="16" viewBox="0 0 16 16"><circle cx="8" cy="8" r="7.1" fill="#fff" stroke="#e4e8e8" stroke-width="1.7"/><circle cx="8" cy="8" r="7.1" fill="none" stroke="#50b383" stroke-width="1.7"/></svg>
<div class="t" style="left:986.65px;width:200px;text-align:center;top:175.01px;font-size:8.4px;color:#62696d;">8</div>
<svg class="r" style="left:1078.65px;top:200.26px" width="16" height="16" viewBox="0 0 16 16"><circle cx="8" cy="8" r="7.1" fill="#fff" stroke="#e4e8e8" stroke-width="1.7"/><circle cx="8" cy="8" r="7.1" fill="none" stroke="#50b383" stroke-width="1.7"/></svg>
<div class="t" style="left:986.65px;width:200px;text-align:center;top:204.45px;font-size:8.4px;color:#62696d;">8</div>
<svg class="r" style="left:1078.65px;top:229.70px" width="16" height="16" viewBox="0 0 16 16"><circle cx="8" cy="8" r="7.1" fill="#fff" stroke="#e4e8e8" stroke-width="1.7"/><circle cx="8" cy="8" r="7.1" fill="none" stroke="#50b383" stroke-width="1.7"/></svg>
<div class="t" style="left:986.65px;width:200px;text-align:center;top:233.89px;font-size:8.4px;color:#62696d;">8</div>
<svg class="r" style="left:1078.65px;top:259.14px" width="16" height="16" viewBox="0 0 16 16"><circle cx="8" cy="8" r="7.1" fill="#fff" stroke="#e4e8e8" stroke-width="1.7"/><circle cx="8" cy="8" r="7.1" fill="none" stroke="#50b383" stroke-width="1.7"/></svg>
<div class="t" style="left:986.65px;width:200px;text-align:center;top:263.33px;font-size:8.4px;color:#62696d;">8</div>
<svg class="r" style="left:1078.65px;top:288.58px" width="16" height="16" viewBox="0 0 16 16"><circle cx="8" cy="8" r="7.1" fill="#fff" stroke="#e4e8e8" stroke-width="1.7"/><circle cx="8" cy="8" r="7.1" fill="none" stroke="#50b383" stroke-width="1.7"/></svg>
<div class="t" style="left:986.65px;width:200px;text-align:center;top:292.77px;font-size:8.4px;color:#62696d;">8</div>
<svg class="r" style="left:1078.65px;top:318.02px" width="16" height="16" viewBox="0 0 16 16"><circle cx="8" cy="8" r="7.1" fill="#fff" stroke="#e4e8e8" stroke-width="1.7"/><circle cx="8" cy="8" r="7.1" fill="none" stroke="#50b383" stroke-width="1.7"/></svg>
<div class="t" style="left:986.65px;width:200px;text-align:center;top:322.21px;font-size:8.4px;color:#62696d;">8</div>
<svg class="r" style="left:1078.65px;top:347.46px" width="16" height="16" viewBox="0 0 16 16"><circle cx="8" cy="8" r="7.1" fill="#fff" stroke="#e4e8e8" stroke-width="1.7"/><circle cx="8" cy="8" r="7.1" fill="none" stroke="#50b383" stroke-width="1.7"/></svg>
<div class="t" style="left:986.65px;width:200px;text-align:center;top:351.65px;font-size:8.4px;color:#62696d;">8</div>
<svg class="r" style="left:1078.65px;top:376.90px" width="16" height="16" viewBox="0 0 16 16"><circle cx="8" cy="8" r="7.1" fill="#fff" stroke="#e4e8e8" stroke-width="1.7"/><circle cx="8" cy="8" r="7.1" fill="none" stroke="#50b383" stroke-width="1.7"/></svg>
<div class="t" style="left:986.65px;width:200px;text-align:center;top:381.09px;font-size:8.4px;color:#62696d;">8</div>
<svg class="r" style="left:1078.65px;top:406.34px" width="16" height="16" viewBox="0 0 16 16"><circle cx="8" cy="8" r="7.1" fill="#fff" stroke="#e4e8e8" stroke-width="1.7"/><circle cx="8" cy="8" r="7.1" fill="none" stroke="#50b383" stroke-width="1.7" stroke-dasharray="33.458 44.611" transform="rotate(-90 8 8)"/></svg>
<div class="t" style="left:986.65px;width:200px;text-align:center;top:410.53px;font-size:8.4px;color:#62696d;">6</div>
<svg class="r" style="left:1078.65px;top:435.78px" width="16" height="16" viewBox="0 0 16 16"><circle cx="8" cy="8" r="7.1" fill="#fff" stroke="#e4e8e8" stroke-width="1.7"/><circle cx="8" cy="8" r="7.1" fill="none" stroke="#50b383" stroke-width="1.7" stroke-dasharray="11.153 44.611" transform="rotate(-90 8 8)"/></svg>
<div class="t" style="left:986.65px;width:200px;text-align:center;top:439.97px;font-size:8.4px;color:#62696d;">2</div>
<svg class="r" style="left:1078.65px;top:465.22px" width="16" height="16" viewBox="0 0 16 16"><circle cx="8" cy="8" r="7.1" fill="#fff" stroke="#e4e8e8" stroke-width="1.7"/><circle cx="8" cy="8" r="7.1" fill="none" stroke="#50b383" stroke-width="1.7" stroke-dasharray="22.305 44.611" transform="rotate(-90 8 8)"/></svg>
<div class="t" style="left:986.65px;width:200px;text-align:center;top:469.41px;font-size:8.4px;color:#62696d;">4</div>
<svg class="r" style="left:1078.65px;top:494.66px" width="16" height="16" viewBox="0 0 16 16"><circle cx="8" cy="8" r="7.1" fill="#fff" stroke="#e4e8e8" stroke-width="1.7"/><circle cx="8" cy="8" r="7.1" fill="none" stroke="#50b383" stroke-width="1.7"/></svg>
<div class="t" style="left:986.65px;width:200px;text-align:center;top:498.85px;font-size:8.4px;color:#62696d;">8</div>
<svg class="r" style="left:1078.65px;top:524.10px" width="16" height="16" viewBox="0 0 16 16"><circle cx="8" cy="8" r="7.1" fill="#fff" stroke="#e4e8e8" stroke-width="1.7"/><circle cx="8" cy="8" r="7.1" fill="none" stroke="#50b383" stroke-width="1.7" stroke-dasharray="39.034 44.611" transform="rotate(-90 8 8)"/></svg>
<div class="t" style="left:986.65px;width:200px;text-align:center;top:528.29px;font-size:8.4px;color:#62696d;">7</div>
<svg class="r" style="left:1200.35px;top:82.50px" width="16" height="16" viewBox="0 0 16 16"><circle cx="8" cy="8" r="7.1" fill="#fff" stroke="#e4e8e8" stroke-width="1.7"/><circle cx="8" cy="8" r="7.1" fill="none" stroke="#50b383" stroke-width="1.7"/></svg>
<div class="t" style="left:1108.35px;width:200px;text-align:center;top:86.69px;font-size:8.4px;color:#62696d;">8</div>
<svg class="r" style="left:1200.35px;top:111.94px" width="16" height="16" viewBox="0 0 16 16"><circle cx="8" cy="8" r="7.1" fill="#fff" stroke="#e4e8e8" stroke-width="1.7"/><circle cx="8" cy="8" r="7.1" fill="none" stroke="#50b383" stroke-width="1.7"/></svg>
<div class="t" style="left:1108.35px;width:200px;text-align:center;top:116.13px;font-size:8.4px;color:#62696d;">8</div>
<svg class="r" style="left:1200.35px;top:141.38px" width="16" height="16" viewBox="0 0 16 16"><circle cx="8" cy="8" r="7.1" fill="#fff" stroke="#e4e8e8" stroke-width="1.7"/><circle cx="8" cy="8" r="7.1" fill="none" stroke="#50b383" stroke-width="1.7"/></svg>
<div class="t" style="left:1108.35px;width:200px;text-align:center;top:145.57px;font-size:8.4px;color:#62696d;">8</div>
<svg class="r" style="left:1200.35px;top:170.82px" width="16" height="16" viewBox="0 0 16 16"><circle cx="8" cy="8" r="7.1" fill="#fff" stroke="#e4e8e8" stroke-width="1.7"/><circle cx="8" cy="8" r="7.1" fill="none" stroke="#50b383" stroke-width="1.7"/></svg>
<div class="t" style="left:1108.35px;width:200px;text-align:center;top:175.01px;font-size:8.4px;color:#62696d;">8</div>
<svg class="r" style="left:1200.35px;top:200.26px" width="16" height="16" viewBox="0 0 16 16"><circle cx="8" cy="8" r="7.1" fill="#fff" stroke="#e4e8e8" stroke-width="1.7"/><circle cx="8" cy="8" r="7.1" fill="none" stroke="#50b383" stroke-width="1.7"/></svg>
<div class="t" style="left:1108.35px;width:200px;text-align:center;top:204.45px;font-size:8.4px;color:#62696d;">8</div>
<svg class="r" style="left:1200.35px;top:229.70px" width="16" height="16" viewBox="0 0 16 16"><circle cx="8" cy="8" r="7.1" fill="#fff" stroke="#e4e8e8" stroke-width="1.7"/><circle cx="8" cy="8" r="7.1" fill="none" stroke="#50b383" stroke-width="1.7"/></svg>
<div class="t" style="left:1108.35px;width:200px;text-align:center;top:233.89px;font-size:8.4px;color:#62696d;">8</div>
<svg class="r" style="left:1200.35px;top:259.14px" width="16" height="16" viewBox="0 0 16 16"><circle cx="8" cy="8" r="7.1" fill="#fff" stroke="#e4e8e8" stroke-width="1.7"/><circle cx="8" cy="8" r="7.1" fill="none" stroke="#50b383" stroke-width="1.7"/></svg>
<div class="t" style="left:1108.35px;width:200px;text-align:center;top:263.33px;font-size:8.4px;color:#62696d;">8</div>
<svg class="r" style="left:1200.35px;top:288.58px" width="16" height="16" viewBox="0 0 16 16"><circle cx="8" cy="8" r="7.1" fill="#fff" stroke="#e4e8e8" stroke-width="1.7"/><circle cx="8" cy="8" r="7.1" fill="none" stroke="#50b383" stroke-width="1.7"/></svg>
<div class="t" style="left:1108.35px;width:200px;text-align:center;top:292.77px;font-size:8.4px;color:#62696d;">8</div>
<svg class="r" style="left:1200.35px;top:318.02px" width="16" height="16" viewBox="0 0 16 16"><circle cx="8" cy="8" r="7.1" fill="#fff" stroke="#e4e8e8" stroke-width="1.7"/><circle cx="8" cy="8" r="7.1" fill="none" stroke="#50b383" stroke-width="1.7"/></svg>
<div class="t" style="left:1108.35px;width:200px;text-align:center;top:322.21px;font-size:8.4px;color:#62696d;">8</div>
<svg class="r" style="left:1200.35px;top:347.46px" width="16" height="16" viewBox="0 0 16 16"><circle cx="8" cy="8" r="7.1" fill="#fff" stroke="#e4e8e8" stroke-width="1.7"/><circle cx="8" cy="8" r="7.1" fill="none" stroke="#50b383" stroke-width="1.7"/></svg>
<div class="t" style="left:1108.35px;width:200px;text-align:center;top:351.65px;font-size:8.4px;color:#62696d;">8</div>
<svg class="r" style="left:1200.35px;top:376.90px" width="16" height="16" viewBox="0 0 16 16"><circle cx="8" cy="8" r="7.1" fill="#fff" stroke="#e4e8e8" stroke-width="1.7"/><circle cx="8" cy="8" r="7.1" fill="none" stroke="#50b383" stroke-width="1.7"/></svg>
<div class="t" style="left:1108.35px;width:200px;text-align:center;top:381.09px;font-size:8.4px;color:#62696d;">8</div>
<svg class="r" style="left:1200.35px;top:406.34px" width="16" height="16" viewBox="0 0 16 16"><circle cx="8" cy="8" r="7.1" fill="#fff" stroke="#e4e8e8" stroke-width="1.7"/><circle cx="8" cy="8" r="7.1" fill="none" stroke="#50b383" stroke-width="1.7"/></svg>
<div class="t" style="left:1108.35px;width:200px;text-align:center;top:410.53px;font-size:8.4px;color:#62696d;">8</div>
<svg class="r" style="left:1200.35px;top:435.78px" width="16" height="16" viewBox="0 0 16 16"><circle cx="8" cy="8" r="7.1" fill="#fff" stroke="#e4e8e8" stroke-width="1.7"/><circle cx="8" cy="8" r="7.1" fill="none" stroke="#50b383" stroke-width="1.7"/></svg>
<div class="t" style="left:1108.35px;width:200px;text-align:center;top:439.97px;font-size:8.4px;color:#62696d;">8</div>
<svg class="r" style="left:1200.35px;top:465.22px" width="16" height="16" viewBox="0 0 16 16"><circle cx="8" cy="8" r="7.1" fill="#fff" stroke="#e4e8e8" stroke-width="1.7"/><circle cx="8" cy="8" r="7.1" fill="none" stroke="#50b383" stroke-width="1.7"/></svg>
<div class="t" style="left:1108.35px;width:200px;text-align:center;top:469.41px;font-size:8.4px;color:#62696d;">8</div>
<svg class="r" style="left:1200.35px;top:494.66px" width="16" height="16" viewBox="0 0 16 16"><circle cx="8" cy="8" r="7.1" fill="#fff" stroke="#e4e8e8" stroke-width="1.7"/><circle cx="8" cy="8" r="7.1" fill="none" stroke="#50b383" stroke-width="1.7"/></svg>
<div class="t" style="left:1108.35px;width:200px;text-align:center;top:498.85px;font-size:8.4px;color:#62696d;">8</div>
<svg class="r" style="left:1200.35px;top:524.10px" width="16" height="16" viewBox="0 0 16 16"><circle cx="8" cy="8" r="7.1" fill="#fff" stroke="#e4e8e8" stroke-width="1.7"/><circle cx="8" cy="8" r="7.1" fill="none" stroke="#50b383" stroke-width="1.7"/></svg>
<div class="t" style="left:1108.35px;width:200px;text-align:center;top:528.29px;font-size:8.4px;color:#62696d;">8</div>
<div class="r" style="left:1269.5px;top:77px;width:10.5px;height:583px;background:#f4f5f6;"></div>
<div class="r" style="left:1270px;top:88.5px;width:9px;height:284px;background:#b9c9c5;"></div>
<div class="r" style="left:1271.5px;top:81.5px;width:0;height:0;border-left:3px solid transparent;border-right:3px solid transparent;border-bottom:3px solid #50585c"></div>
<div class="r" style="left:1271.5px;top:652.5px;width:0;height:0;border-left:3px solid transparent;border-right:3px solid transparent;border-top:3px solid #50585c"></div>
<div class="r" style="left:390px;top:660px;width:890px;height:22px;background:#f4f5f6;"></div>
<div class="r" style="left:389.6px;top:661px;width:114.2px;height:21px;background:#eceeee;border-radius:0 3px 3px 0;"></div>
<svg class="r" style="left:400px;top:667.2px" width="9.4" height="9.4" viewBox="0 0 10 10"><circle cx="5" cy="5" r="4.3" fill="none" stroke="#6b7478" stroke-width="0.9"/><path d="M5 2.5 L5 5.2 L7 6.3" fill="none" stroke="#6b7478" stroke-width="0.9"/></svg>
<div class="t" style="left:415.00px;top:668.41px;font-size:8.14px;color:#5b6468;">Ganzen Tag anzeigen</div>
<div class="r" style="left:0px;top:682px;width:1280px;height:17px;background:#466e76;"></div>
<div class="t" style="left:538.60px;top:686.29px;font-size:8.4px;color:#ffffff;text-shadow:0.3px 0 0 #fff;">© <b>2reserve</b>.ch – das Reservationssystem | Impressum</div>
</body></html>
